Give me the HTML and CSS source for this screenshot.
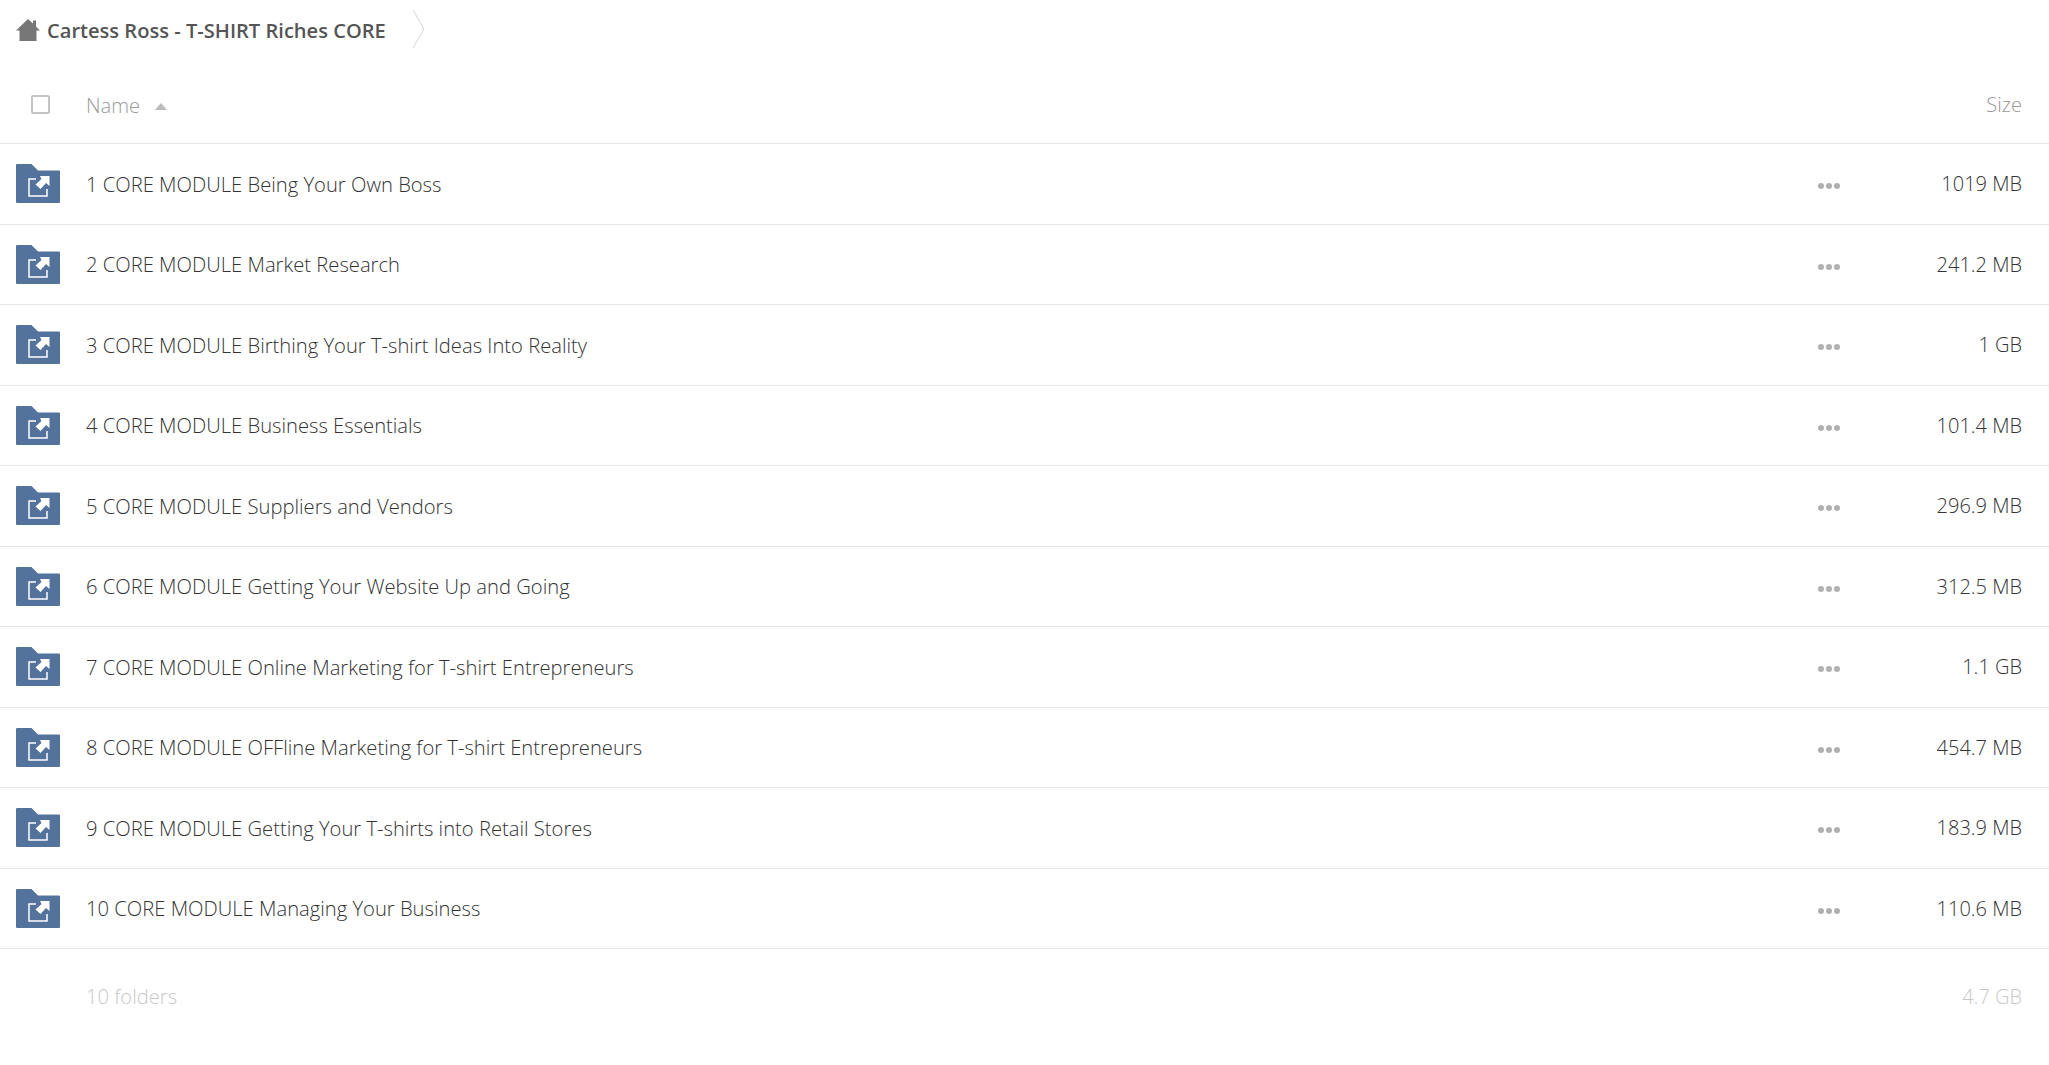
FILE: index.html
```html
<!DOCTYPE html>
<html>
<head>
   <title>Cartess Ross - T-SHIRT Riches CORE</title>
   <link rel="stylesheet" href="styles.css">
</head>
<body>
<svg class="defs" width="0" height="0">
   <symbol id="folder" viewBox="0 0 44 39">
      <path fill="#54739c" d="M1 0H15.500L22 6.500H43a1 1 0 0 1 1 1V38a1 1 0 0 1-1 1H1a1 1 0 0 1-1-1V1a1 1 0 0 1 1-1Z"/>
      <path fill="none" stroke="#fff" stroke-width="1.5" d="M20 15H13V32H31V25"/>
      <path fill="#fff" d="M24 12H33.500V22L30 19L24.500 25L19.500 20.500L25.500 15Z"/>
   </symbol>
</svg>

<div class="crumbs">
   <svg class="home" viewBox="0 0 24 22"><path fill="#777" d="M12 0L17 4.500V1.500H20V7.500L24 11.500H20.500V22H3.500V11.500H0Z"/></svg>
   <span class="crumb">Cartess Ross - T-SHIRT Riches CORE</span>
   <svg class="chev" viewBox="0 0 13 39"><path fill="none" stroke="#d6d6d6" d="M1 0L12 19L1 38"/></svg>
</div>

<div class="head">
   <div class="col-check"><span class="check"></span></div>
   <div class="col-name">Name <span class="sort"></span></div>
   <div class="col-size">Size</div>
</div>

<div class="row">
   <svg class="icon"><use href="#folder"/></svg>
   <div class="col-name">1 CORE MODULE Being Your Own Boss</div>
   <div class="dots"><i></i><i></i><i></i></div>
   <div class="col-size">1019 MB</div>
</div>
<div class="row">
   <svg class="icon"><use href="#folder"/></svg>
   <div class="col-name">2 CORE MODULE Market Research</div>
   <div class="dots"><i></i><i></i><i></i></div>
   <div class="col-size">241.2 MB</div>
</div>
<div class="row">
   <svg class="icon"><use href="#folder"/></svg>
   <div class="col-name">3 CORE MODULE Birthing Your T-shirt Ideas Into Reality</div>
   <div class="dots"><i></i><i></i><i></i></div>
   <div class="col-size">1 GB</div>
</div>
<div class="row">
   <svg class="icon"><use href="#folder"/></svg>
   <div class="col-name">4 CORE MODULE Business Essentials</div>
   <div class="dots"><i></i><i></i><i></i></div>
   <div class="col-size">101.4 MB</div>
</div>
<div class="row">
   <svg class="icon"><use href="#folder"/></svg>
   <div class="col-name">5 CORE MODULE Suppliers and Vendors</div>
   <div class="dots"><i></i><i></i><i></i></div>
   <div class="col-size">296.9 MB</div>
</div>
<div class="row">
   <svg class="icon"><use href="#folder"/></svg>
   <div class="col-name">6 CORE MODULE Getting Your Website Up and Going</div>
   <div class="dots"><i></i><i></i><i></i></div>
   <div class="col-size">312.5 MB</div>
</div>
<div class="row">
   <svg class="icon"><use href="#folder"/></svg>
   <div class="col-name">7 CORE MODULE Online Marketing for T-shirt Entrepreneurs</div>
   <div class="dots"><i></i><i></i><i></i></div>
   <div class="col-size">1.1 GB</div>
</div>
<div class="row">
   <svg class="icon"><use href="#folder"/></svg>
   <div class="col-name">8 CORE MODULE OFFline Marketing for T-shirt Entrepreneurs</div>
   <div class="dots"><i></i><i></i><i></i></div>
   <div class="col-size">454.7 MB</div>
</div>
<div class="row">
   <svg class="icon"><use href="#folder"/></svg>
   <div class="col-name">9 CORE MODULE Getting Your T-shirts into Retail Stores</div>
   <div class="dots"><i></i><i></i><i></i></div>
   <div class="col-size">183.9 MB</div>
</div>
<div class="row">
   <svg class="icon"><use href="#folder"/></svg>
   <div class="col-name">10 CORE MODULE Managing Your Business</div>
   <div class="dots"><i></i><i></i><i></i></div>
   <div class="col-size">110.6 MB</div>
</div>

<div class="foot">
   <div class="col-name">10 folders</div>
   <div class="col-size">4.7 GB</div>
</div>
</body>
</html>
```

FILE: styles.css
```css
html, body {
   margin: 0;
   padding: 0;
   background: #fff;
}
body {
   font-family: "Open Sans", sans-serif;
   font-weight: 300;
   font-size: 20.2px;
   color: #333;
   height: 1065px;
   overflow: hidden;
}
.defs {
   position: absolute;
}

/* Breadcrumb */
.crumbs {
   display: flex;
   align-items: center;
   height: 60px;
   padding-left: 16px;
}
.home {
   width: 24px;
   height: 22px;
}
.crumb {
   margin-left: 7px;
   font-size: 20.1px;
   font-weight: 600;
   color: #555;
}
.chev {
   width: 13px;
   height: 39px;
   margin-left: 26px;
   margin-bottom: 2px;
}

/* Table header */
.head {
   display: flex;
   align-items: center;
   height: 84px;
   box-sizing: border-box;
   padding-top: 6px;
   border-bottom: 1px solid #e8e8e8;
   color: #999;
}
.col-check {
   width: 86px;
   padding-left: 31px;
   box-sizing: border-box;
   display: flex;
}
.check {
   width: 15px;
   height: 15px;
   border: 2px solid #c4c4c4;
   border-radius: 2px;
}
.col-name {
   flex: 1;
}
.sort {
   display: inline-block;
   width: 0;
   height: 0;
   margin-left: 10px;
   margin-bottom: 3px;
   border-left: 6px solid transparent;
   border-right: 6px solid transparent;
   border-bottom: 7px solid #bbb;
}
.col-size {
   padding-right: 27px;
   font-size: 20px;
   text-align: right;
}

/* Folder rows */
.row {
   display: flex;
   align-items: center;
   height: 80.5px;
   box-sizing: border-box;
   border-bottom: 1px solid #e8e8e8;
}
.icon {
   width: 44px;
   height: 39px;
   margin-left: 16px;
   margin-right: 26px;
}
.dots {
   display: flex;
   gap: 2px;
   margin-top: 5px;
   width: 64px;
}
.dots i {
   width: 6px;
   height: 6px;
   border-radius: 50%;
   background: #b0b0b0;
}
.row .col-size {
   width: 140px;
}

/* Summary */
.foot {
   display: flex;
   align-items: center;
   height: 94px;
   padding-left: 86px;
   color: #c8c8c8;
}
```
